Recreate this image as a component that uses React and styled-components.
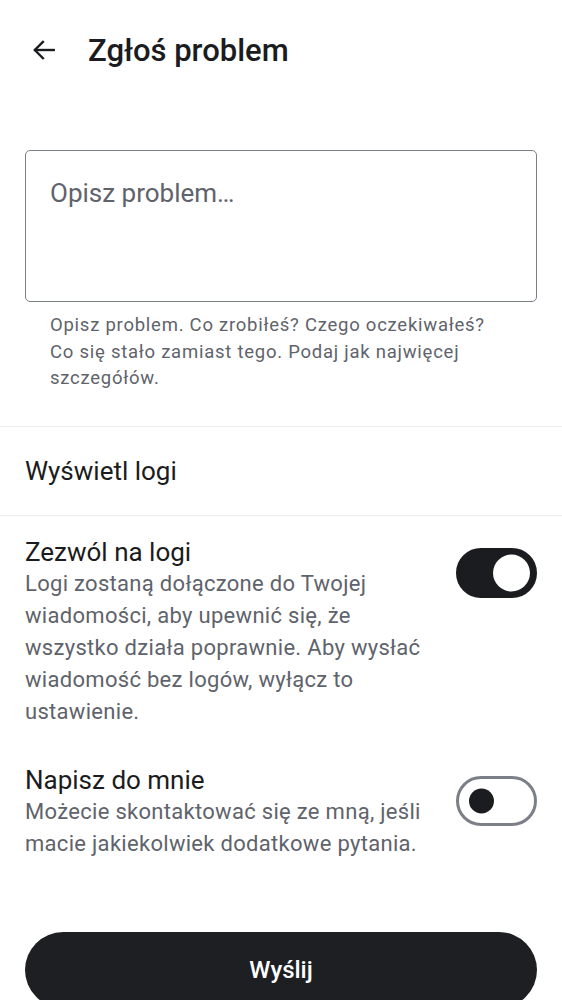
import React, { useState } from "react";
import styled, { createGlobalStyle } from "styled-components";

const GlobalStyle = createGlobalStyle`
    body {
        margin: 0;
        background: #fff;
        font-family: Roboto, "Noto Sans", sans-serif;
        color: #1b1c20;
    }
`;

const Page = styled.div`
    width: 562px;
    height: 1000px;
    overflow: hidden;
    display: flex;
    flex-direction: column;
`;

const TopBar = styled.header`
    height: 100px;
    display: flex;
    align-items: center;
    padding-left: 28px;
    gap: 28px;
`;

const BackButton = styled.button`
    width: 32px;
    height: 32px;
    padding: 0;
    border: none;
    background: transparent;
    display: flex;
    align-items: center;
    justify-content: center;
    color: #1b1c20;
`;

const Title = styled.h1`
    margin: 0;
    font-size: 31px;
    font-weight: 500;
    letter-spacing: 0;
`;

const Field = styled.div`
    padding: 50px 25px 0;
`;

const TextArea = styled.textarea`
    box-sizing: border-box;
    width: 100%;
    height: 152px;
    border: 1.5px solid #7b7f87;
    border-radius: 5px;
    padding: 27px 24px;
    resize: none;
    font-family: Roboto, sans-serif;
    font-size: 26px;
    color: #1b1c20;
    outline: none;
    &::placeholder {
        color: #5f636b;
    }
`;

const Helper = styled.p`
    margin: 6px 0 0;
    padding: 0 70px 0 50px;
    font-size: 18.5px;
    line-height: 26.5px;
    letter-spacing: 0.75px;
    color: #5f636b;
`;

const Divider = styled.hr`
    margin: ${(p) => p.top || 0}px 0 0;
    border: none;
    height: 1px;
    background: #ececf1;
`;

const ListRow = styled.div`
    height: 88px;
    display: flex;
    align-items: center;
    padding: 0 25px;
    font-size: 26px;
`;

const SettingRow = styled.div`
    display: flex;
    align-items: flex-start;
    gap: 20px;
    padding: ${(p) => p.pad};
`;

const SettingText = styled.div`
    flex: 1;
`;

const SettingTitle = styled.div`
    font-size: 26px;
    line-height: 32px;
`;

const SettingDesc = styled.div`
    font-size: 22px;
    line-height: 32px;
    letter-spacing: 0.3px;
    color: #5f636b;
`;

const Track = styled.button`
    box-sizing: border-box;
    flex: none;
    position: relative;
    width: 81px;
    height: 50px;
    border-radius: 25px;
    padding: 0;
    cursor: pointer;
    background: ${(p) => (p.$on ? "#1b1c20" : "#fff")};
    border: 3px solid ${(p) => (p.$on ? "#1b1c20" : "#7b7f87")};
    margin-top: ${(p) => p.$offset}px;
`;

const Thumb = styled.span`
    position: absolute;
    top: 50%;
    border-radius: 50%;
    transform: translateY(-50%);
    width: ${(p) => (p.$on ? 37 : 25)}px;
    height: ${(p) => (p.$on ? 37 : 25)}px;
    background: ${(p) => (p.$on ? "#fff" : "#1b1c20")};
    left: ${(p) => (p.$on ? 34 : 9.5)}px;
`;

const Footer = styled.div`
    padding: 0 25px;
    margin-top: auto;
`;

const SendButton = styled.button`
    width: 100%;
    height: 76px;
    border: none;
    border-radius: 38px;
    background: #1e1f23;
    color: #fff;
    font-family: Roboto, sans-serif;
    font-size: 24px;
    font-weight: 500;
    margin-bottom: -8px;
`;

function Toggle({ on, onClick, offset }) {
    return (
        <Track $on={on} onClick={onClick} $offset={offset}>
            <Thumb $on={on} />
        </Track>
    );
}

export default function App() {
    const [logs, setLogs] = useState(true);
    const [contact, setContact] = useState(false);

    return (
        <Page>
            <GlobalStyle />
            <TopBar>
                <BackButton>
                    <svg width="26" height="26" viewBox="0 0 24 24" fill="none" stroke="currentColor" strokeWidth="2.2" strokeLinecap="square">
                        <path d="M21 12H4" />
                        <path d="M11 4.5L3.5 12L11 19.5" />
                    </svg>
                </BackButton>
                <Title>Zgłoś problem</Title>
            </TopBar>

            <Field>
                <TextArea placeholder="Opisz problem…" />
            </Field>
            <Helper>
                Opisz problem. Co zrobiłeś? Czego oczekiwałeś? Co się stało zamiast tego. Podaj jak najwięcej szczegółów.
            </Helper>

            <Divider top={34} />
            <ListRow>Wyświetl logi</ListRow>
            <Divider />

            <SettingRow pad="20px 25px 0">
                <SettingText>
                    <SettingTitle>Zezwól na logi</SettingTitle>
                    <SettingDesc>
                        Logi zostaną dołączone do Twojej wiadomości, aby upewnić się, że wszystko działa poprawnie. Aby wysłać wiadomość bez logów, wyłącz to ustawienie.
                    </SettingDesc>
                </SettingText>
                <Toggle on={logs} onClick={() => setLogs(!logs)} offset={12} />
            </SettingRow>

            <SettingRow pad="36px 25px 0">
                <SettingText>
                    <SettingTitle>Napisz do mnie</SettingTitle>
                    <SettingDesc>
                        Możecie skontaktować się ze mną, jeśli macie jakiekolwiek dodatkowe pytania.
                    </SettingDesc>
                </SettingText>
                <Toggle on={contact} onClick={() => setContact(!contact)} offset={12} />
            </SettingRow>

            <Footer>
                <SendButton>Wyślij</SendButton>
            </Footer>
        </Page>
    );
}
